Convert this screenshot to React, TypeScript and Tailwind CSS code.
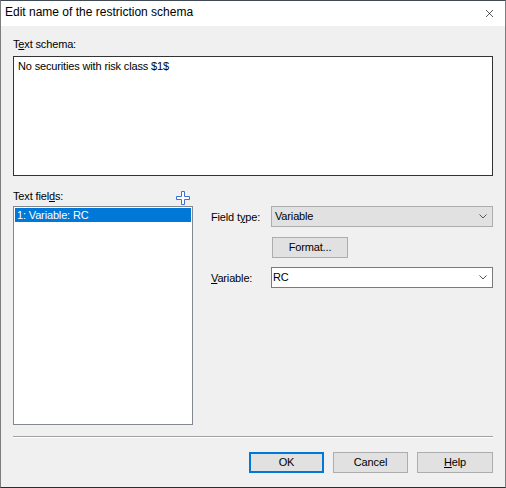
import { X } from "lucide-react";

const font = "font-['Liberation_Sans','Arial',sans-serif]";

function Chevron() {
  return (
    <svg width="8" height="5" viewBox="0 0 8 5" className="shrink-0">
      <path d="M0.5 0.5 L4 4 L7.5 0.5" fill="none" stroke="#555" strokeWidth="1" />
    </svg>
  );
}

function PlusIcon() {
  return (
    <svg width="14" height="14" viewBox="0 0 14 14">
      <path
        d="M5.5 0.5 H8.5 V5.5 H13.5 V8.5 H8.5 V13.5 H5.5 V8.5 H0.5 V5.5 H5.5 Z"
        fill="#ffffff"
        stroke="#3c6fd6"
        strokeWidth="1"
      />
    </svg>
  );
}

export default function App() {
  return (
    <div className={`${font} w-[506px] h-[488px] flex flex-col bg-[#f0f0f0] border-t border-t-[#3f4a52] border-b border-b-[#2b2b2b] border-x border-x-[#7d7d7d] text-[11px] tracking-[-0.15px] leading-[15px] text-black`}>
      {/* Title bar */}
      <div className="h-[25px] bg-white flex items-center justify-between pl-[4px] pr-[9px] shrink-0">
        <span className="text-[12px] tracking-normal -mt-[2px]">Edit name of the restriction schema</span>
        <X className="h-[13px] w-[13px] text-black" strokeWidth={1.2} />
      </div>

      <div className="flex-1 flex flex-col px-[12px]">
        {/* Text schema */}
        <div className="mt-[11px] h-[15px]">
          T<span className="underline">e</span>xt schema:
        </div>
        <div className="mt-[4px] h-[120px] bg-white border border-[#333333] px-[4px] pt-[2px]">
          No securities with risk class $1$
        </div>

        {/* Fields area */}
        <div className="mt-[13px] flex">
          <div className="w-[180px] flex flex-col">
            <div className="flex items-center justify-between h-[15px]">
              <span>
                Text fiel<span className="underline">d</span>s:
              </span>
              <span className="mr-[3px] -mb-[2px]">
                <PlusIcon />
              </span>
            </div>
            <div className="mt-[2px] h-[219px] bg-white border border-[#828790] p-[1px]">
              <div className="h-[14px] bg-[#0078d7] text-white pl-[2px] leading-[14px]">1: Variable: RC</div>
            </div>
          </div>

          <div className="flex-1 flex flex-col pl-[18px] pt-[17px]">
            <div className="flex items-center h-[21px]">
              <span className="w-[60px] mt-[2px]">
                Field t<span className="underline">y</span>pe:
              </span>
              <div className="flex-1 h-[21px] bg-[#e1e1e1] border border-[#adadad] flex items-center justify-between pl-[3px] pr-[5px]">
                <span>Variable</span>
                <Chevron />
              </div>
            </div>
            <div className="mt-[10px] pl-[61px]">
              <div className="w-[76px] h-[21px] bg-[#e1e1e1] border border-[#adadad] flex items-center justify-center">
                Format...
              </div>
            </div>
            <div className="mt-[9px] flex items-center h-[21px]">
              <span className="w-[60px] mt-[2px]">
                <span className="underline">V</span>ariable:
              </span>
              <div className="flex-1 h-[21px] bg-white border border-[#7a7a7a] flex items-center justify-between pl-[1px] pr-[5px]">
                <span>RC</span>
                <Chevron />
              </div>
            </div>
          </div>
        </div>

        {/* Separator */}
        <div className="mt-[11px] border-t border-[#a0a0a0] border-b border-b-white" />

        {/* Buttons */}
        <div className="mt-[14px] flex justify-end gap-[9px]">
          <div className="w-[75px] h-[21px] bg-[#e1e1e1] border-2 border-[#0078d7] flex items-center justify-center">
            OK
          </div>
          <div className="w-[75px] h-[21px] bg-[#e1e1e1] border border-[#adadad] flex items-center justify-center">
            Cancel
          </div>
          <div className="w-[76px] h-[21px] bg-[#e1e1e1] border border-[#adadad] flex items-center justify-center">
            <span>
              <span className="underline">H</span>elp
            </span>
          </div>
        </div>
      </div>
    </div>
  );
}
